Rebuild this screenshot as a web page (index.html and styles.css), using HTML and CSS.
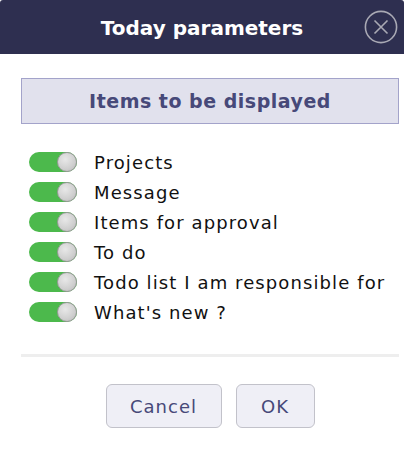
FILE: index.html
```html
<!DOCTYPE html>
<html>
<head>
<meta charset="utf-8">
<link rel="stylesheet" href="styles.css">
</head>
<body>
<div class="dialog">
  <div class="header">
    <span class="title">Today parameters</span>
    <button class="close" aria-label="Close">
      <svg width="34" height="34" viewBox="0 0 34 34">
        <circle cx="17" cy="17" r="15.6" fill="none" stroke="#a9a9b4" stroke-width="1.6"/>
        <path d="M10.5 10.5 L23.5 23.5 M23.5 10.5 L10.5 23.5" stroke="#a9a9b4" stroke-width="1.6" fill="none"/>
      </svg>
    </button>
  </div>
  <div class="body">
    <div class="section">Items to be displayed</div>
    <ul class="items">
      <li><span class="toggle"><span class="thumb"></span></span>Projects</li>
      <li><span class="toggle"><span class="thumb"></span></span>Message</li>
      <li><span class="toggle"><span class="thumb"></span></span>Items for approval</li>
      <li><span class="toggle"><span class="thumb"></span></span>To do</li>
      <li><span class="toggle"><span class="thumb"></span></span>Todo list I am responsible for</li>
      <li><span class="toggle"><span class="thumb"></span></span>What's new ?</li>
    </ul>
    <div class="divider"></div>
    <div class="actions">
      <button class="btn cancel">Cancel</button>
      <button class="btn ok">OK</button>
    </div>
  </div>
</div>
</body>
</html>
```
FILE: styles.css
```css
html, body {
  margin: 0;
  padding: 0;
  background: #ffffff;
}
body {
  font-family: "DejaVu Sans", Verdana, sans-serif;
}
.dialog {
  width: 404px;
  height: 454px;
  background: #fff;
}
.header {
  position: relative;
  height: 54px;
  background: #2e2f50;
  border-radius: 3px 3px 0 0;
  display: flex;
  align-items: center;
  justify-content: center;
}
.title {
  color: #ffffff;
  font-weight: bold;
  font-size: 20px;
  margin-top: 2px;
}
.close {
  position: absolute;
  right: 6px;
  top: 10px;
  width: 34px;
  height: 34px;
  padding: 0;
  border: none;
  background: none;
  display: block;
}
.close svg { display: block; }
.body {
  padding: 24px 5px 0 21px;
}
.section {
  height: 44px;
  width: 376px;
  background: #e1e1ed;
  border: 1px solid #a3a3ca;
  color: #474979;
  font-weight: bold;
  font-size: 19px;
  letter-spacing: 0.5px;
  display: flex;
  align-items: center;
  justify-content: center;
}
.items {
  list-style: none;
  margin: 0;
  padding: 23px 0 0 8px;
}
.items li {
  height: 30px;
  display: flex;
  align-items: center;
  font-size: 18px;
  letter-spacing: 1.1px;
  color: #111;
}
.toggle {
  position: relative;
  width: 48px;
  height: 20px;
  border-radius: 10px;
  background: #4cb94c;
  margin-right: 17px;
  flex: none;
}
.thumb {
  position: absolute;
  right: 0;
  top: 0;
  width: 18px;
  height: 18px;
  border-radius: 50%;
  border: 1px solid #9a9a9a;
  background: radial-gradient(circle at 40% 35%, #e8e8e8 0%, #cfcfcf 60%, #b8b8b8 100%);
}
.divider {
  margin-top: 27px;
  width: 378px;
  height: 3px;
  background: #eeeeee;
}
.actions {
  display: flex;
  justify-content: center;
  gap: 14px;
  padding-top: 27px;
}
.btn {
  height: 44px;
  border: 1px solid #c2c2ca;
  border-radius: 6px;
  background: #efeff6;
  color: #474979;
  font-family: "DejaVu Sans", Verdana, sans-serif;
  font-size: 18px;
  letter-spacing: 1px;
  padding: 0;
}
.cancel { width: 116px; }
.ok { width: 79px; }
```
